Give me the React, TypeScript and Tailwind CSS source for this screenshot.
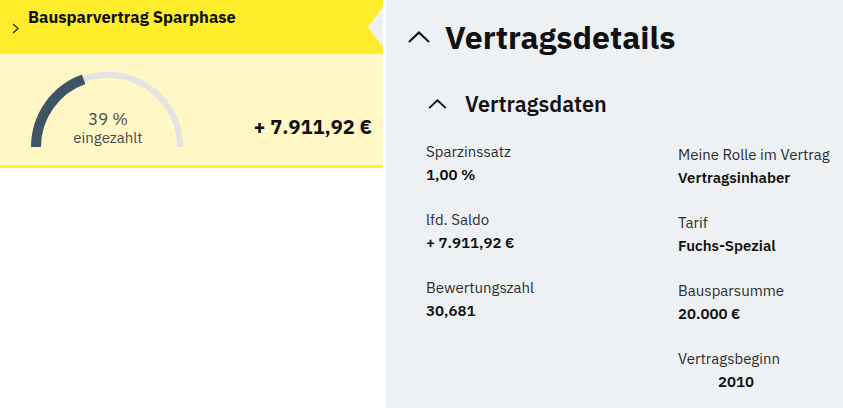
import React from "react";

const font = { fontFamily: '"IBM Plex Sans", "Noto Sans", Roboto, sans-serif' };

function ChevronUp({ className }: { className?: string }) {
  return (
    <svg viewBox="0 0 22 12" className={className} fill="none" stroke="currentColor" strokeWidth={2.2}>
      <path d="M1 11 L11 1.5 L21 11" />
    </svg>
  );
}

function Gauge({ percent }: { percent: number }) {
  const r = 72;
  const cx = 82;
  const cy = 77;
  const a = Math.PI - (percent / 100) * Math.PI;
  const ex = cx + r * Math.cos(a);
  const ey = cy - r * Math.sin(a);
  return (
    <div className="relative h-[82px] w-[164px]">
      <svg width="164" height="82" viewBox="0 0 164 82" fill="none">
        <path d={`M ${cx - r} ${cy} A ${r} ${r} 0 0 1 ${cx + r} ${cy}`} stroke="#e4e5e3" strokeWidth={6} />
        <path d={`M ${cx - r} ${cy} A ${r} ${r} 0 0 1 ${ex} ${ey}`} stroke="#3f5566" strokeWidth={10} />
      </svg>
      <div className="absolute left-0 right-0 top-[39px] flex flex-col items-center text-[#4a4a4a]">
        <span className="text-[17px] leading-[20px]">{percent} %</span>
        <span className="text-[15px] leading-[18px]">eingezahlt</span>
      </div>
    </div>
  );
}

function Field({ label, value, valueClass }: { label: string; value: string; valueClass?: string }) {
  return (
    <div className="flex h-[68px] flex-col">
      <span className="text-[15px] leading-[22px] text-[#2d2d2d]">{label}</span>
      <span className={`mt-[2px] text-[15px] font-semibold leading-[20px] text-[#111] ${valueClass ?? ""}`}>{value}</span>
    </div>
  );
}

export default function App() {
  return (
    <div className="flex h-[408px] w-[843px] bg-white" style={font}>
      <div className="w-[383px] shrink-0">
        <div className="relative h-[54px] bg-[#ffed2b]">
          <svg className="absolute left-[12px] top-[23px]" width="7" height="11" viewBox="0 0 7 11" fill="none" stroke="#222" strokeWidth={1.2}>
            <path d="M1 1 L6 5.5 L1 10" />
          </svg>
          <div className="pl-[28px] pt-[7px] text-[16.5px] font-bold leading-[20px] text-[#111]">Bausparvertrag Sparphase</div>
          <svg className="absolute right-0 top-[7px]" width="15" height="40" viewBox="0 0 15 40">
            <polygon points="15,0 0,20 15,40" fill="#eff1f4" />
          </svg>
        </div>
        <div className="flex h-[114px] items-start justify-between border-b-[3px] border-[#fdef3a] bg-[#fff8c6] pl-[26px] pr-[11px] pt-[16px]">
          <Gauge percent={39} />
          <div className="mt-[44px] text-[20px] font-bold leading-[26px] text-[#111]">+ 7.911,92 €</div>
        </div>
      </div>
      <div className="ml-[3px] flex-1 bg-[#eef1f4] pl-[22px] pt-[16px]">
        <div className="flex items-center">
          <ChevronUp className="h-[12px] w-[22px] text-[#111]" />
          <h1 className="ml-[15px] text-[32px] font-bold leading-[42px] text-[#111]">Vertragsdetails</h1>
        </div>
        <div className="ml-[20px] mt-[31px] flex items-center">
          <ChevronUp className="h-[10px] w-[19px] text-[#111]" />
          <h2 className="ml-[18px] text-[21.5px] font-semibold leading-[30px] text-[#111]">Vertragsdaten</h2>
        </div>
        <div className="ml-[18px] mt-[22px] grid grid-cols-[252px_1fr]">
          <div>
            <Field label="Sparzinssatz" value="1,00 %" />
            <Field label="lfd. Saldo" value="+ 7.911,92 €" />
            <Field label="Bewertungszahl" value="30,681" />
          </div>
          <div className="pt-[3px]">
            <Field label="Meine Rolle im Vertrag" value="Vertragsinhaber" />
            <Field label="Tarif" value="Fuchs-Spezial" />
            <Field label="Bausparsumme" value="20.000 €" />
            <Field label="Vertragsbeginn" value="2010" valueClass="pl-[40px]" />
          </div>
        </div>
      </div>
    </div>
  );
}
